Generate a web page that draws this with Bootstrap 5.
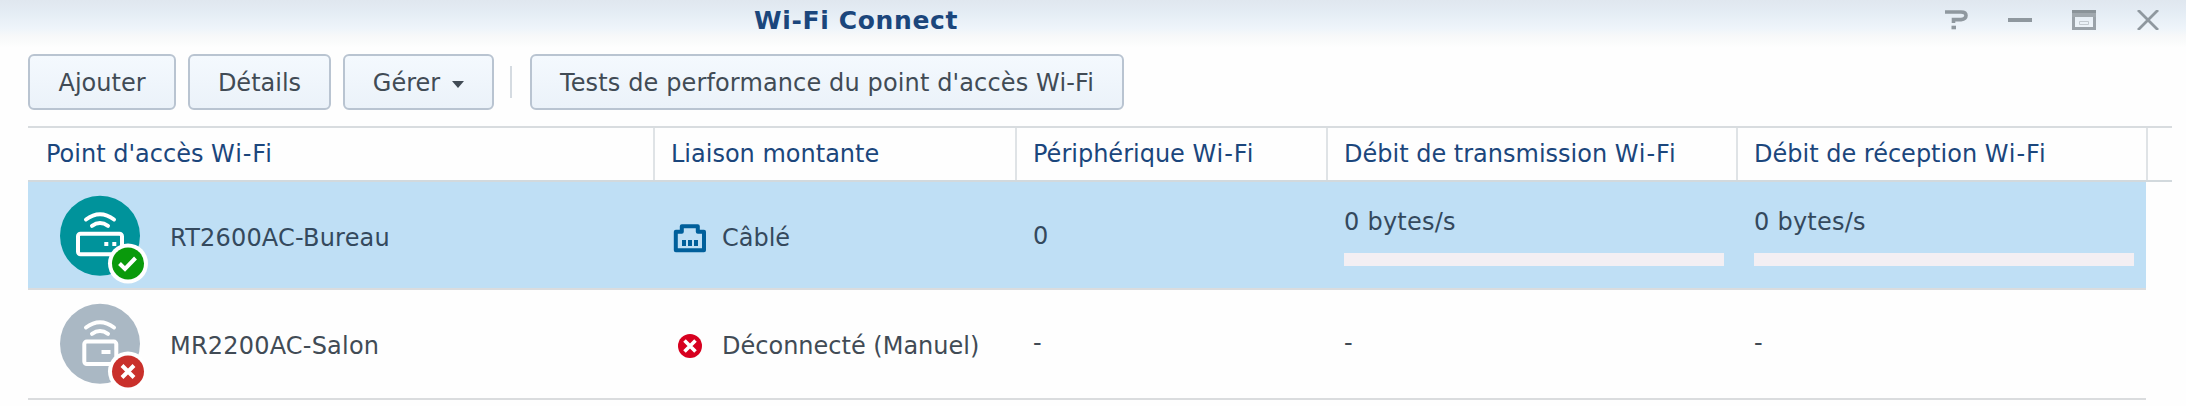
<!DOCTYPE html>
<html lang="fr">
<head>
<meta charset="utf-8">
<title>Wi-Fi Connect</title>
<link rel="stylesheet" href="https://cdn.jsdelivr.net/npm/bootstrap@5.3.0/dist/css/bootstrap.min.css">
<style>
body{background:#fefefe;font-family:Verdana,"DejaVu Sans",sans-serif;font-size:24px;line-height:32px;color:#414b55;width:2186px;height:406px;overflow:hidden;white-space:nowrap}
svg{display:block;flex:none}
.titlebar{height:54px;background:linear-gradient(#e0e7ef 0,#e4ecf4 12px,#eef4fa 28px,#f7f8f9 36px,#fefefe 48px);padding:0 26px 0 754px}
.titlebar h1{font-size:25px;line-height:32px;font-weight:700;color:#1b467c;margin:5px 0 0;letter-spacing:.65px}
.winbtns{gap:40px;padding-top:10px;height:30px;color:#8f989f}
.toolbar{padding-left:28px;height:56px}
.btn-dsm{--bs-btn-padding-x:0;--bs-btn-padding-y:0;--bs-btn-font-size:24px;--bs-btn-line-height:32px;--bs-btn-color:#414b55;--bs-btn-border-width:2px;--bs-btn-border-color:#b9c4d1;--bs-btn-border-radius:6px;height:56px;background:linear-gradient(#f4f9fe,#ebf2f9);padding-top:2px}
.sep{width:2px;height:32px;background:#d5dbe1;margin:0 18px 0 16px}
.caret{width:0;height:0;border:6px solid transparent;border-top:7px solid #414b55;border-bottom:0;margin:3px 0 0 12px}
.wf{letter-spacing:.9px}
.gridhead{margin:16px 14px 0 28px;border-top:2px solid #d8dcdf;border-bottom:2px solid #d2d9dd;height:56px;color:#1b467c}
.gridrow{width:2118px;margin-left:28px;border-bottom:2px solid #dadcde}
.cols{display:grid;grid-template-columns:627px 362px 311px 410px 410px}
.gridhead .cell{border-right:2px solid #dfe3e6;padding:10px 0 0 16px}
.gridhead .cell:first-child{padding-left:18px}
.r1{height:108px;background:#bfdff5;color:#34495d}
.r2{height:110px}
.gridrow .cell{padding-left:16px}
.device{padding-left:32px!important;gap:22px;letter-spacing:.2px}
.rate{letter-spacing:.25px}
.meter{height:13px;width:380px;background:#f3eff3;margin-top:15px}
</style>
</head>
<body>
<header class="titlebar d-flex justify-content-between align-items-start">
  <h1>Wi-Fi Connect</h1>
  <div class="winbtns d-flex">
    <svg width="24" height="20" fill="none" stroke="currentColor" stroke-width="3.6"><path d="M1 2h16q5 0 5 3.500T17 9.600H9.500V13"/><path d="M7.500 17.500h4.500"/></svg>
    <svg width="24" height="20"><path d="M0 8h24v4H0z" fill="currentColor"/></svg>
    <svg width="24" height="20" fill="none"><path stroke="#9aa2a9" stroke-width="3" d="M1.500 2v16.500h21V2"/><path fill="#8a9399" d="M0 0h24v3H0z"/><path fill="#a0a8ae" d="M0 3h24v4H0z"/><path stroke="#c3cad0" d="M7.500 11.500h9v3h-9z"/></svg>
    <svg width="24" height="20" stroke="currentColor" stroke-width="2.800"><path d="M2 0l20 20M22 0L2 20"/></svg>
  </div>
</header>
<nav class="toolbar d-flex align-items-center">
  <button class="btn btn-dsm" style="width:148px">Ajouter</button>
  <button class="btn btn-dsm" style="width:143px;margin-left:12px">Détails</button>
  <button class="btn btn-dsm d-flex align-items-center justify-content-center" style="width:151px;margin-left:12px">Gérer<span class="caret"></span></button>
  <div class="sep"></div>
  <button class="btn btn-dsm" style="width:594px;letter-spacing:.13px">Tests de performance du point d'accès Wi-Fi</button>
</nav>
<main>
  <div class="gridhead cols">
    <div class="cell">Point d'accès <span class="wf">Wi-Fi</span></div>
    <div class="cell">Liaison montante</div>
    <div class="cell">Périphérique <span class="wf">Wi-Fi</span></div>
    <div class="cell">Débit de transmission <span class="wf">Wi-Fi</span></div>
    <div class="cell">Débit de réception <span class="wf">Wi-Fi</span></div>
  </div>
  <div class="gridrow cols r1">
    <div class="cell device d-flex">
      <svg width="88" height="106" viewBox="60 182 88 106" fill="none" stroke="#fff" stroke-width="4" stroke-linecap="round">
        <circle cx="100" cy="235.800" r="40" fill="#00939b" stroke="none"/>
        <path d="M86 219.500q14-10.500 28 0M92 225.800q8-5.600 16 0"/>
        <rect x="78" y="233.800" width="44" height="20.500" rx="2.500"/>
        <path d="M104.300 242h4v4h-4zM112.300 242h4v4h-4z" fill="#fff" stroke="none"/>
        <circle cx="128" cy="263.500" r="20" fill="#fff" stroke="none"/>
        <circle cx="128" cy="263.500" r="16" fill="#0a9a0c" stroke="none"/>
        <path d="M119.500 263.500l5.500 5.500 10.500-11" stroke-linecap="butt"/>
      </svg>
      <span style="padding-top:40px">RT2600AC-Bureau</span>
    </div>
    <div class="cell d-flex" style="padding-left:18px">
      <svg width="34" height="106" viewBox="673 182 34 106"><path d="M675.800 250.200v-18.400h6v-5.600h16v5.600h6.200v18.400z" fill="none" stroke="#005f9b" stroke-width="4" stroke-linejoin="round"/><path d="M682 240h4v6h-4zM688 240h4v6h-4zM694 240h4v6h-4z" fill="#005f9b"/></svg>
      <span style="padding:40px 0 0 15px">Câblé</span>
    </div>
    <div class="cell" style="padding-top:38px">0</div>
    <div class="cell rate" style="padding-top:24px"><div>0 bytes/s</div><div class="meter"></div></div>
    <div class="cell rate" style="padding-top:24px"><div>0 bytes/s</div><div class="meter"></div></div>
  </div>
  <div class="gridrow cols r2">
    <div class="cell device d-flex">
      <svg width="88" height="108" viewBox="60 290 88 108" fill="none" stroke="#fff" stroke-width="4" stroke-linecap="round">
        <circle cx="100" cy="343.800" r="40" fill="#aab8c4" stroke="none"/>
        <path d="M86 327.500q14-10.500 28 0M92 333.800q8-5.600 16 0"/>
        <rect x="84.300" y="341.600" width="32" height="22.500" rx="2.500"/>
        <path d="M101.500 350h9v4h-9z" fill="#fff" stroke="none"/>
        <circle cx="128" cy="371.500" r="20" fill="#fff" stroke="none"/>
        <circle cx="128" cy="371.500" r="16" fill="#c9302b" stroke="none"/>
        <path d="M122 365.500l12 12M134 365.500l-12 12" stroke-linecap="butt"/>
      </svg>
      <span style="padding-top:40px">MR2200AC-Salon</span>
    </div>
    <div class="cell d-flex" style="padding-left:18px">
      <svg width="34" height="108" viewBox="673 290 34 108"><circle cx="690" cy="346" r="12" fill="#d7001f"/><path d="M684.500 340.500l11 11M695.500 340.500l-11 11" stroke="#fff" stroke-width="3.600"/></svg>
      <span style="padding:40px 0 0 15px">Déconnecté (Manuel)</span>
    </div>
    <div class="cell" style="padding-top:37px">-</div>
    <div class="cell" style="padding-top:37px">-</div>
    <div class="cell" style="padding-top:37px">-</div>
  </div>
</main>
<script src="https://cdn.jsdelivr.net/npm/bootstrap@5.3.0/dist/js/bootstrap.bundle.min.js"></script>
</body>
</html>
